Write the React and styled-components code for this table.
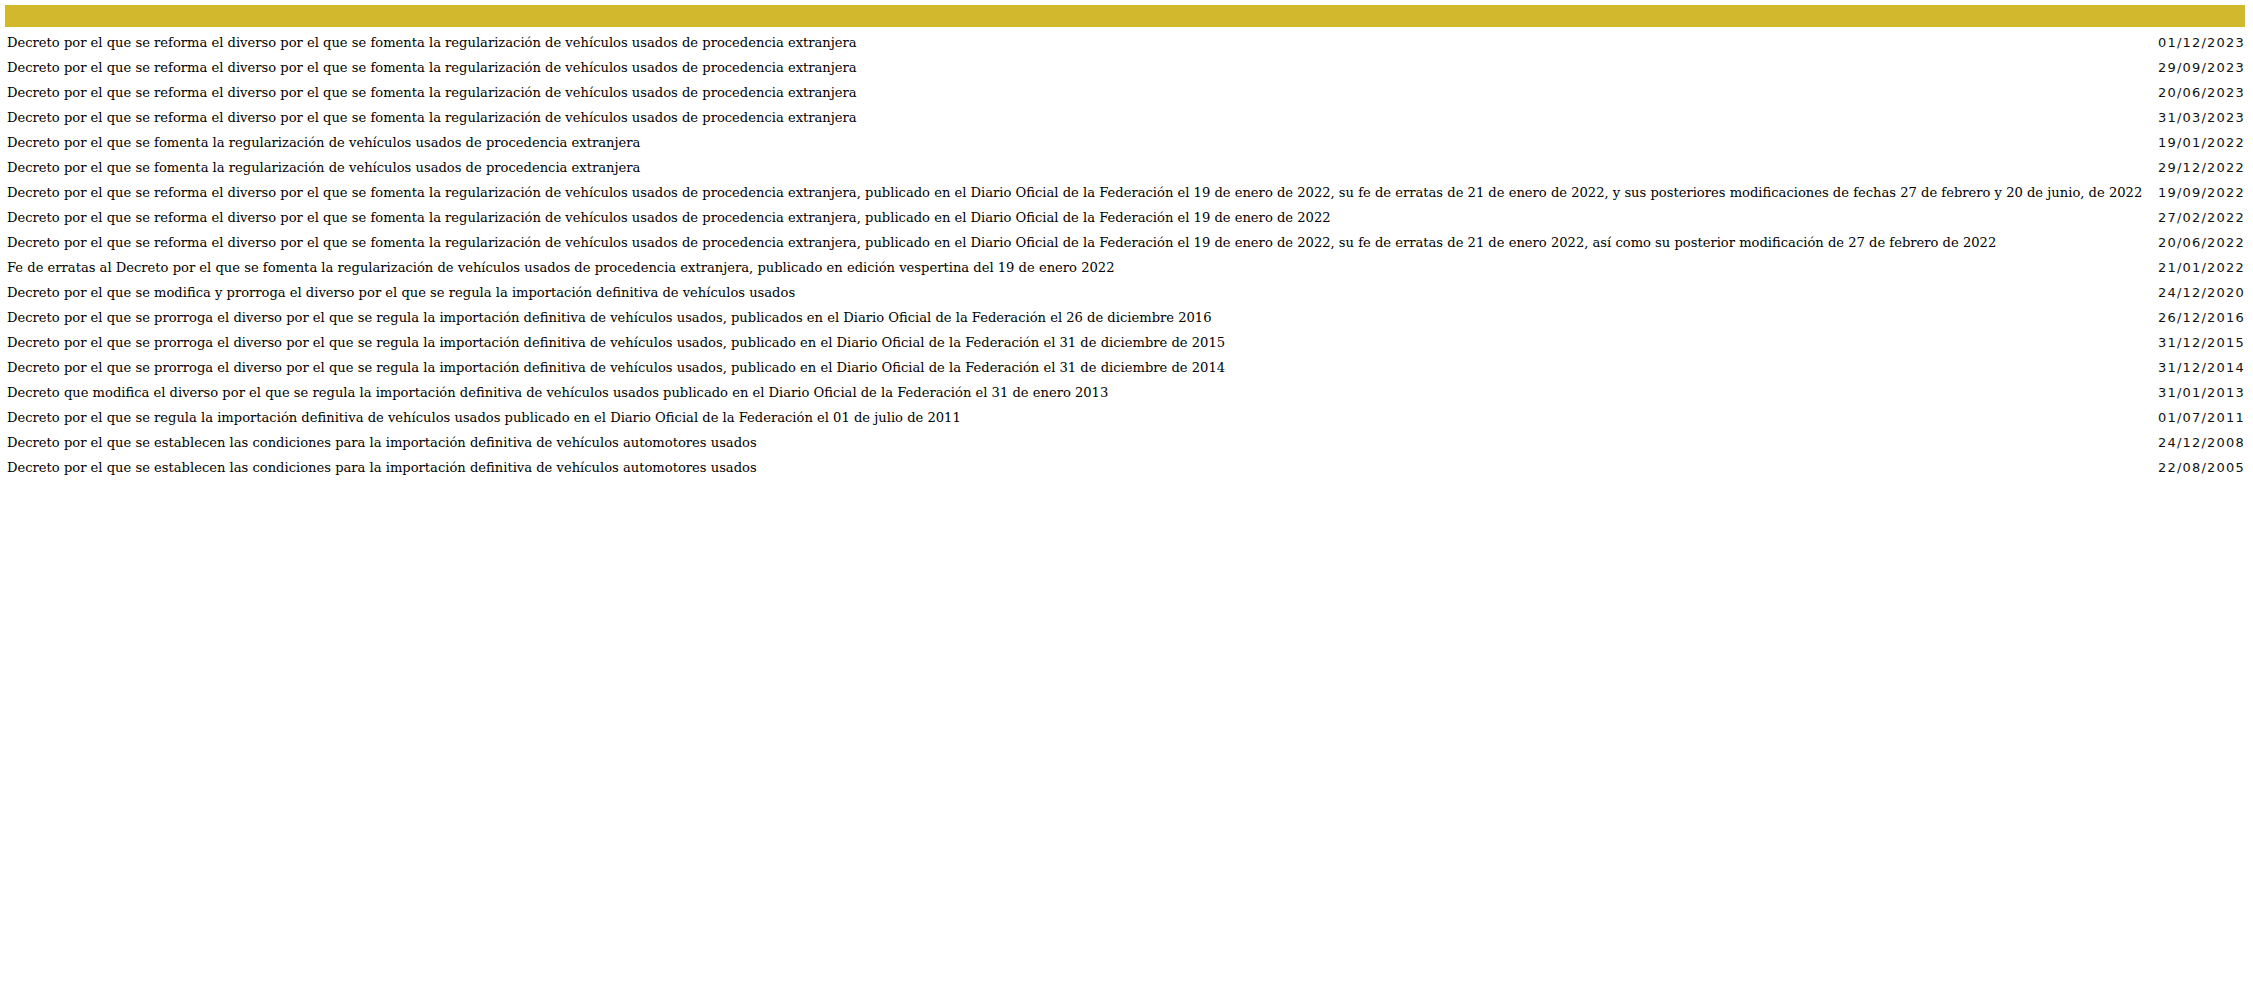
import styled, { createGlobalStyle } from "styled-components";

const Global = createGlobalStyle`
  html, body {
    margin: 0;
    padding: 0;
    background: #ffffff;
  }
`;

const decretos = [
  ["Decreto por el que se reforma el diverso por el que se fomenta la regularización de vehículos usados de procedencia extranjera", "01/12/2023"],
  ["Decreto por el que se reforma el diverso por el que se fomenta la regularización de vehículos usados de procedencia extranjera", "29/09/2023"],
  ["Decreto por el que se reforma el diverso por el que se fomenta la regularización de vehículos usados de procedencia extranjera", "20/06/2023"],
  ["Decreto por el que se reforma el diverso por el que se fomenta la regularización de vehículos usados de procedencia extranjera", "31/03/2023"],
  ["Decreto por el que se fomenta la regularización de vehículos usados de procedencia extranjera", "19/01/2022"],
  ["Decreto por el que se fomenta la regularización de vehículos usados de procedencia extranjera", "29/12/2022"],
  ["Decreto por el que se reforma el diverso por el que se fomenta la regularización de vehículos usados de procedencia extranjera, publicado en el Diario Oficial de la Federación el 19 de enero de 2022, su fe de erratas de 21 de enero de 2022, y sus posteriores modificaciones de fechas 27 de febrero y 20 de junio, de 2022", "19/09/2022"],
  ["Decreto por el que se reforma el diverso por el que se fomenta la regularización de vehículos usados de procedencia extranjera, publicado en el Diario Oficial de la Federación el 19 de enero de 2022", "27/02/2022"],
  ["Decreto por el que se reforma el diverso por el que se fomenta la regularización de vehículos usados de procedencia extranjera, publicado en el Diario Oficial de la Federación el 19 de enero de 2022, su fe de erratas de 21 de enero 2022, así como su posterior modificación de 27 de febrero de 2022", "20/06/2022"],
  ["Fe de erratas al Decreto por el que se fomenta la regularización de vehículos usados de procedencia extranjera, publicado en edición vespertina del 19 de enero 2022", "21/01/2022"],
  ["Decreto por el que se modifica y prorroga el diverso por el que se regula la importación definitiva de vehículos usados", "24/12/2020"],
  ["Decreto por el que se prorroga el diverso por el que se regula la importación definitiva de vehículos usados, publicados en el Diario Oficial de la Federación el 26 de diciembre 2016", "26/12/2016"],
  ["Decreto por el que se prorroga el diverso por el que se regula la importación definitiva de vehículos usados, publicado en el Diario Oficial de la Federación el 31 de diciembre de 2015", "31/12/2015"],
  ["Decreto por el que se prorroga el diverso por el que se regula la importación definitiva de vehículos usados, publicado en el Diario Oficial de la Federación el 31 de diciembre de 2014", "31/12/2014"],
  ["Decreto que modifica el diverso por el que se regula la importación definitiva de vehículos usados publicado en el Diario Oficial de la Federación el 31 de enero 2013", "31/01/2013"],
  ["Decreto por el que se regula la importación definitiva de vehículos usados publicado en el Diario Oficial de la Federación el 01 de julio de 2011", "01/07/2011"],
  ["Decreto por el que se establecen las condiciones para la importación definitiva de vehículos automotores usados", "24/12/2008"],
  ["Decreto por el que se establecen las condiciones para la importación definitiva de vehículos automotores usados", "22/08/2005"],
];

export default function App() {
  return (
    <Pagina>
      <Global />
      <Tabla>
        <thead>
          <tr>
            <Encabezado colSpan={2}></Encabezado>
          </tr>
        </thead>
        <tbody>
          {decretos.map(([titulo, fecha], i) => (
            <Fila key={i}>
              <Titulo>{titulo}</Titulo>
              <Fecha>{fecha}</Fecha>
            </Fila>
          ))}
        </tbody>
      </Tabla>
    </Pagina>
  );
}

const Pagina = styled.div`
  padding: 5px 8px 0 5px;
`;

const Tabla = styled.table`
  width: 100%;
  border-collapse: collapse;
`;

const Encabezado = styled.th`
  height: 22px;
  padding: 0;
  background-color: #d2b82d;
`;

const Fila = styled.tr`
  height: 25px;
`;

const Titulo = styled.td`
  padding: 6px 3px 0 2px;
  font-family: "DejaVu Serif", serif;
  font-size: 13.1px;
  color: #000000;
  white-space: nowrap;
  vertical-align: middle;
`;

const Fecha = styled.td`
  width: 1%;
  padding: 6px 0 0 6px;
  text-align: right;
  font-family: "DejaVu Sans", sans-serif;
  font-size: 13px;
  letter-spacing: 1.2px;
  color: #111111;
  white-space: nowrap;
  vertical-align: middle;
`;
